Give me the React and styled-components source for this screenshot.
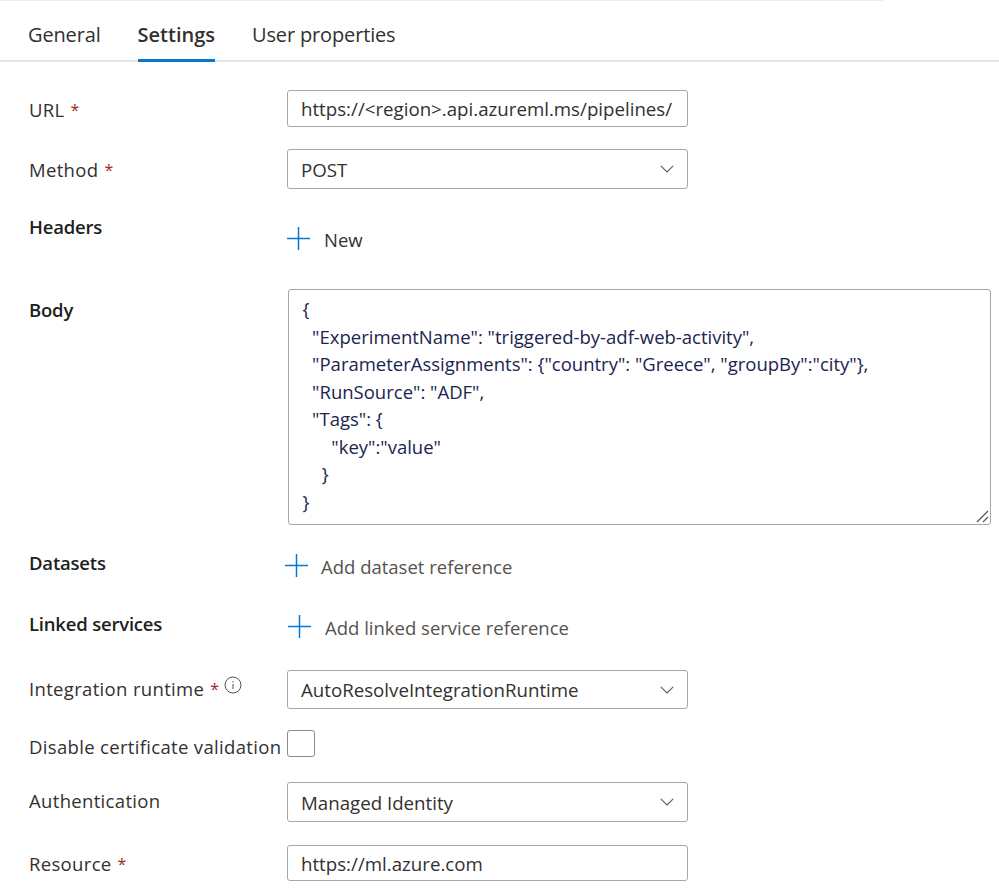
import React from "react";
import styled, { createGlobalStyle } from "styled-components";

const Global = createGlobalStyle`
  html, body { margin: 0; padding: 0; background: #fff; }
  body { font-family: "Open Sans", "Noto Sans", "Liberation Sans", sans-serif; color: #323130; }
`;

const Page = styled.div`
  width: 999px;
  height: 892px;
  overflow: hidden;
  box-sizing: border-box;
`;
const TopRule = styled.div`
  width: 883px;
  height: 1px;
  background: #ededed;
`;
const Tabs = styled.div`
  display: flex;
  height: 59px;
  padding-left: 28px;
  gap: 37px;
  border-bottom: 2px solid #e6e6e6;
`;
const Tab = styled.div`
  position: relative;
  height: 61px;
  box-sizing: border-box;
  padding-top: 19px;
  font-size: 20px;
  line-height: 30px;
  letter-spacing: ${(p) => (p.$active ? "0" : "-0.15px")};
  font-weight: ${(p) => (p.$active ? 600 : 400)};
  color: #323130;
  ${(p) => p.$active && `border-bottom: 3px solid #0078d4;`}
`;
const Form = styled.div`
  padding-left: 29px;
  display: flex;
  flex-direction: column;
`;
const Row = styled.div`
  display: flex;
  height: ${(p) => p.$h}px;
  margin-top: ${(p) => p.$mt || 0}px;
`;
const LabelCol = styled.div`
  width: 258px;
  flex: none;
  padding-top: ${(p) => p.$pt || 0}px;
  font-size: 18.5px;
  line-height: 26px;
  letter-spacing: ${(p) => (p.$strong ? "-0.2px" : "0.33px")};
  font-weight: ${(p) => (p.$strong ? 600 : 500)};
  color: ${(p) => (p.$strong ? "#201f1e" : "#323130")};
  white-space: nowrap;
  display: flex;
  align-items: flex-start;
`;
const Req = styled.span`
  color: #a4262c;
  margin-left: 6px;
  font-weight: 400;
  font-size: 16px;
`;
const Field = styled.div`
  width: 401px;
  height: ${(p) => p.$h}px;
  box-sizing: border-box;
  border: 1px solid #a6a6a6;
  border-radius: 3px;
  padding: 0 13px;
  display: flex;
  align-items: center;
  justify-content: space-between;
  font-size: 18.7px;
  color: #323130;
  white-space: nowrap;
  overflow: hidden;
`;
const BodyField = styled.div`
  position: relative;
  margin-left: 1px;
  width: 703px;
  height: 236px;
  box-sizing: border-box;
  border: 1px solid #a6a6a6;
  border-radius: 3px;
  padding: 5px 12px 5px 13.5px;
  font-size: 18.5px;
  line-height: 27.5px;
  color: #1a2550;
  white-space: pre;
`;
const Grip = styled.svg`
  position: absolute;
  right: 1px;
  bottom: 1px;
`;
const AddAction = styled.div`
  display: flex;
  align-items: center;
  gap: ${(p) => p.$gap || 14}px;
  height: 30px;
  margin-left: ${(p) => p.$ml || 0}px;
  margin-top: ${(p) => p.$mt || 0}px;
  font-size: 18.5px;
  color: ${(p) => (p.$muted ? "#55534f" : "#323130")};
`;
const PlusIcon = styled.svg`
  flex: none;
  margin-bottom: 2px;
`;
const Checkbox = styled.div`
  width: 28px;
  height: 27px;
  box-sizing: border-box;
  border: 1px solid #8a8a8a;
  border-radius: 3px;
`;
const InfoIcon = styled.svg`
  margin: 0 0 0 5px;
  flex: none;
`;

const Plus = () => (
  <PlusIcon width="23" height="23" viewBox="0 0 23 23" fill="none" stroke="#0078d4" strokeWidth="1.5">
    <path d="M0 11.5H23M11.5 0V23" />
  </PlusIcon>
);
const Chevron = () => (
  <svg width="14" height="8" viewBox="0 0 14 8" fill="none" stroke="#605e5c" strokeWidth="1.1">
    <path d="M.8.8 7 7l6.2-6.2" />
  </svg>
);

const bodyText = `{
  "ExperimentName": "triggered-by-adf-web-activity",
  "ParameterAssignments": {"country": "Greece", "groupBy":"city"},
  "RunSource": "ADF",
  "Tags": {
      "key":"value"
    }
}`;

export default function App() {
  return (
    <Page>
      <Global />
      <TopRule />
      <Tabs>
        <Tab>General</Tab>
        <Tab $active>Settings</Tab>
        <Tab>User properties</Tab>
      </Tabs>
      <Form>
        <Row $h={37} $mt={28}>
          <LabelCol $pt={7}>URL<Req>*</Req></LabelCol>
          <Field $h={37}>https://&lt;region&gt;.api.azureml.ms/pipelines/</Field>
        </Row>
        <Row $h={40} $mt={22}>
          <LabelCol $pt={8}>Method<Req>*</Req></LabelCol>
          <Field $h={40}>POST<Chevron /></Field>
        </Row>
        <Row $h={100}>
          <LabelCol $pt={25} $strong>Headers</LabelCol>
          <AddAction $mt={35}><Plus />New</AddAction>
        </Row>
        <Row $h={236}>
          <LabelCol $pt={8} $strong>Body</LabelCol>
          <BodyField>
            {bodyText}
            <Grip width="14" height="14" viewBox="0 0 14 14" stroke="#555" strokeWidth="1.2">
              <path d="M2 13 13 2M8 13l5-5" />
            </Grip>
          </BodyField>
        </Row>
        <Row $h={60}>
          <LabelCol $pt={25} $strong>Datasets</LabelCol>
          <AddAction $ml={-2} $mt={26} $gap={13} $muted><Plus />Add dataset reference</AddAction>
        </Row>
        <Row $h={85}>
          <LabelCol $pt={26} $strong>Linked services</LabelCol>
          <AddAction $ml={1} $mt={27} $muted><Plus />Add linked service reference</AddAction>
        </Row>
        <Row $h={39}>
          <LabelCol $pt={6}>
            Integration runtime<Req>*</Req>
            <InfoIcon width="18" height="18" viewBox="0 0 18 18" fill="none" stroke="#55534f">
              <circle cx="9" cy="9" r="8" />
              <path d="M9 8v5M9 5v1.4" />
            </InfoIcon>
          </LabelCol>
          <Field $h={39}>AutoResolveIntegrationRuntime<Chevron /></Field>
        </Row>
        <Row $h={28} $mt={21}>
          <LabelCol $pt={4}>Disable certificate validation</LabelCol>
          <Checkbox />
        </Row>
        <Row $h={40} $mt={24}>
          <LabelCol $pt={6}>Authentication</LabelCol>
          <Field $h={40}>Managed Identity<Chevron /></Field>
        </Row>
        <Row $h={36} $mt={23}>
          <LabelCol $pt={6}>Resource<Req>*</Req></LabelCol>
          <Field $h={36}>https://ml.azure.com</Field>
        </Row>
      </Form>
    </Page>
  );
}
